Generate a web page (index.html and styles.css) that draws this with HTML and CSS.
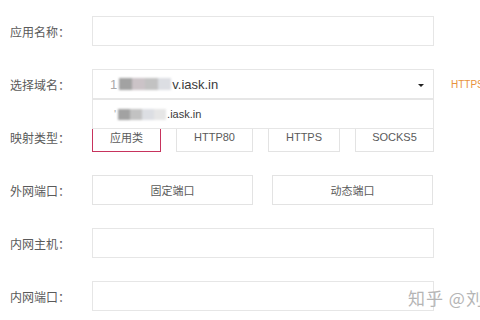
FILE: index.html
```html
<!DOCTYPE html>
<html lang="zh-CN">
<head>
<meta charset="utf-8">
<link rel="stylesheet" href="styles.css">
</head>
<body>
<div class="form">
  <div class="row">
    <label class="label">应用名称：</label>
    <div class="input"></div>
  </div>
  <div class="row">
    <label class="label">选择域名：</label>
    <div class="select">
      <span class="val"><span class="faint">1</span><span class="blur"><i class="b1"></i><i class="b2"></i><i class="b3"></i><i class="b4"></i></span>v.iask.in</span>
      <span class="caret"></span>
      <div class="dropdown">
        <span class="opt"><span class="faint">'</span><span class="blur sm"><i class="b1"></i><i class="b3"></i><i class="b4"></i><i class="b5"></i></span>.iask.in</span>
      </div>
    </div>
    <span class="hint">HTTPS</span>
  </div>
  <div class="row">
    <label class="label">映射类型：</label>
    <div class="types">
      <button class="btn active">应用类<span class="dot"></span></button>
      <button class="btn">HTTP80</button>
      <button class="btn">HTTPS</button>
      <button class="btn">SOCKS5</button>
    </div>
  </div>
  <div class="row">
    <label class="label">外网端口：</label>
    <div class="ports">
      <button class="btn">固定端口</button>
      <button class="btn">动态端口</button>
    </div>
  </div>
  <div class="row">
    <label class="label">内网主机：</label>
    <div class="input"></div>
  </div>
  <div class="row">
    <label class="label">内网端口：</label>
    <div class="input"></div>
  </div>
</div>
<div class="watermark">知乎 @刘</div>
</body>
</html>
```
FILE: styles.css
```css
html, body {
  margin: 0;
  padding: 0;
  background: #fff;
  width: 480px;
  height: 320px;
  overflow: hidden;
  font-family: "Noto Sans CJK SC", "Liberation Sans", sans-serif;
}
.form {
  padding-top: 16px;
  display: flex;
  flex-direction: column;
  gap: 23px;
}
.row {
  display: flex;
  align-items: center;
  height: 30px;
}
.label {
  width: 82px;
  padding-left: 10px;
  font-size: 12px;
  color: #5a5a5a;
  flex: none;
}
.input, .select {
  width: 340px;
  height: 28px;
  border: 1px solid #e6e6e6;
  flex: none;
}
.select {
  position: relative;
  display: flex;
  align-items: center;
  background: #fff;
}
.val {
  margin-left: 17px;
  font-family: "Liberation Sans", sans-serif;
  font-size: 13px;
  color: #3a3a3a;
  display: flex;
  align-items: center;
}
.faint {
  color: #aaa;
}
.blur {
  display: inline-flex;
  margin: 0 1px 0 2px;
  filter: blur(0.8px);
}
.blur i {
  display: block;
  width: 13px;
  height: 12px;
}
.blur .b1 { background: #a2a2a2; }
.blur .b2 { background: #cbc3c7; }
.blur .b3 { background: #c2c2c2; }
.blur .b4 { background: #dcdee3; }
.blur .b5 { background: #e6e6e6; }
.blur.sm i { width: 12px; height: 11px; }
.caret {
  position: absolute;
  right: 9px;
  top: 14px;
  width: 0;
  height: 0;
  border-left: 3px solid transparent;
  border-right: 3px solid transparent;
  border-top: 3px solid #222;
}
.dropdown {
  position: absolute;
  left: -1px;
  top: 29px;
  width: 340px;
  height: 28px;
  border: 1px solid #e6e6e6;
  background: #fff;
  z-index: 5;
  display: flex;
  align-items: center;
}
.opt {
  margin-left: 21px;
  font-family: "Liberation Sans", sans-serif;
  font-size: 11px;
  color: #3a3a3a;
  display: flex;
  align-items: center;
}
.hint {
  margin-left: 17px;
  font-family: "Liberation Sans", sans-serif;
  font-size: 10px;
  color: #e8923c;
  white-space: nowrap;
}
.types {
  display: grid;
  grid-template-columns: 69px 77px 72px 79px;
  column-gap: 15px;
  height: 30px;
}
.ports {
  display: grid;
  grid-template-columns: 161px 161px;
  column-gap: 19px;
  height: 30px;
}
.btn {
  position: relative;
  margin: 0;
  padding: 0;
  height: 30px;
  border: 1px solid #e3e3e3;
  background: #fff;
  font-family: "Liberation Sans", "Noto Sans CJK SC", sans-serif;
  font-size: 11px;
  color: #5a5a5a;
}
.ports .btn {
  font-family: "Noto Sans CJK SC", sans-serif;
  font-size: 11px;
}
.btn.active {
  border-color: #c7335d;
  font-family: "Noto Sans CJK SC", sans-serif;
}
.dot {
  position: absolute;
  right: 1px;
  top: -5px;
  width: 9px;
  height: 9px;
  border-radius: 50%;
  background: #d6124c;
}
.watermark {
  position: absolute;
  left: 408px;
  top: 285px;
  font-size: 17px;
  color: #b5b5b5;
  white-space: nowrap;
  letter-spacing: 1px;
}
```
